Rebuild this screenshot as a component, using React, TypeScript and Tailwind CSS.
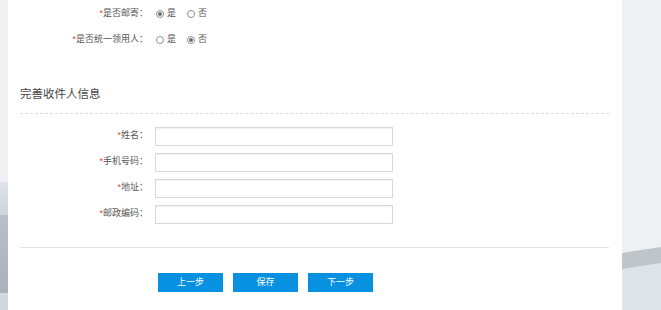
const font = "font-['Liberation_Sans','Noto_Sans_CJK_SC',sans-serif]";

function Radio({ checked, label }: { checked?: boolean; label: string }) {
  return (
    <span className="flex items-center gap-[3px] mr-[11px]">
      <span className="flex h-[8px] w-[8px] items-center justify-center rounded-full border border-[#8f8f8f] bg-white">
        {checked && <span className="h-[4px] w-[4px] rounded-full bg-[#6f6f6f]" />}
      </span>
      <span>{label}</span>
    </span>
  );
}

function Label({ text }: { text: string }) {
  return (
    <div className="w-[128px] shrink-0 text-right">
      <span className="text-[#f04040]">*</span>
      {text}：
    </div>
  );
}

function RadioRow({ label, yes }: { label: string; yes: boolean }) {
  return (
    <div className="flex h-[26px] items-center pt-[1px]">
      <Label text={label} />
      <div className="ml-[8px] flex items-center">
        <Radio checked={yes} label="是" />
        <Radio checked={!yes} label="否" />
      </div>
    </div>
  );
}

function InputRow({ label }: { label: string }) {
  return (
    <div className="flex h-[26px] items-center">
      <Label text={label} />
      <input
        type="text"
        className="ml-[7px] h-[19px] w-[238px] border border-[#d8d8d8] bg-white shadow-[inset_0_1px_1px_rgba(0,0,0,0.06)] outline-none"
      />
    </div>
  );
}

function Btn({ text }: { text: string }) {
  return (
    <button className="h-[19px] w-[65px] bg-[#0891e0] text-[9px] text-white">
      {text}
    </button>
  );
}

export default function App() {
  return (
    <div className={`flex h-[310px] w-[661px] overflow-hidden bg-[#edf1f4] ${font}`}>
      {/* left strip */}
      <div className="flex w-[8px] shrink-0 flex-col">
        <div className="h-[182px] bg-[#edf1f4]" />
        <div className="h-[33px] bg-gradient-to-b from-[#dfe3e8] to-[#cfd4db]" />
        <div className="h-[78px] bg-gradient-to-b from-[#b9c0c9] to-[#a9b1bc]" />
        <div className="flex-1 bg-[#d3d8e0]" />
      </div>

      {/* panel */}
      <div className="w-[614px] shrink-0 bg-white pl-[12px] pr-[13px] text-[9px] text-[#555]">
        <RadioRow label="是否邮寄" yes={true} />
        <RadioRow label="是否统一领用人" yes={false} />

        <div className="mt-[34px] border-b border-dashed border-[#dcdcdc] pb-[11px] text-[11.5px] leading-[16px] text-[#444]">
          完善收件人信息
        </div>

        <div className="mt-[9px]">
          <InputRow label="姓名" />
          <InputRow label="手机号码" />
          <InputRow label="地址" />
          <InputRow label="邮政编码" />
        </div>

        <div className="mt-[20px] border-t border-[#e3e3e3]" />

        <div className="mt-[25px] flex gap-[10px] pl-[138px]">
          <Btn text="上一步" />
          <Btn text="保存" />
          <Btn text="下一步" />
        </div>
      </div>

      {/* right background */}
      <div className="flex-1">
        <svg width="39" height="310" viewBox="0 0 39 310" className="block">
          <rect width="39" height="310" fill="#edf1f4" />
          <polygon points="0,253 39,247 39,310 0,310" fill="#dfe4ea" />
          <polygon points="0,253 39,247 39,263 0,269" fill="#bfc5cb" />
        </svg>
      </div>
    </div>
  );
}
